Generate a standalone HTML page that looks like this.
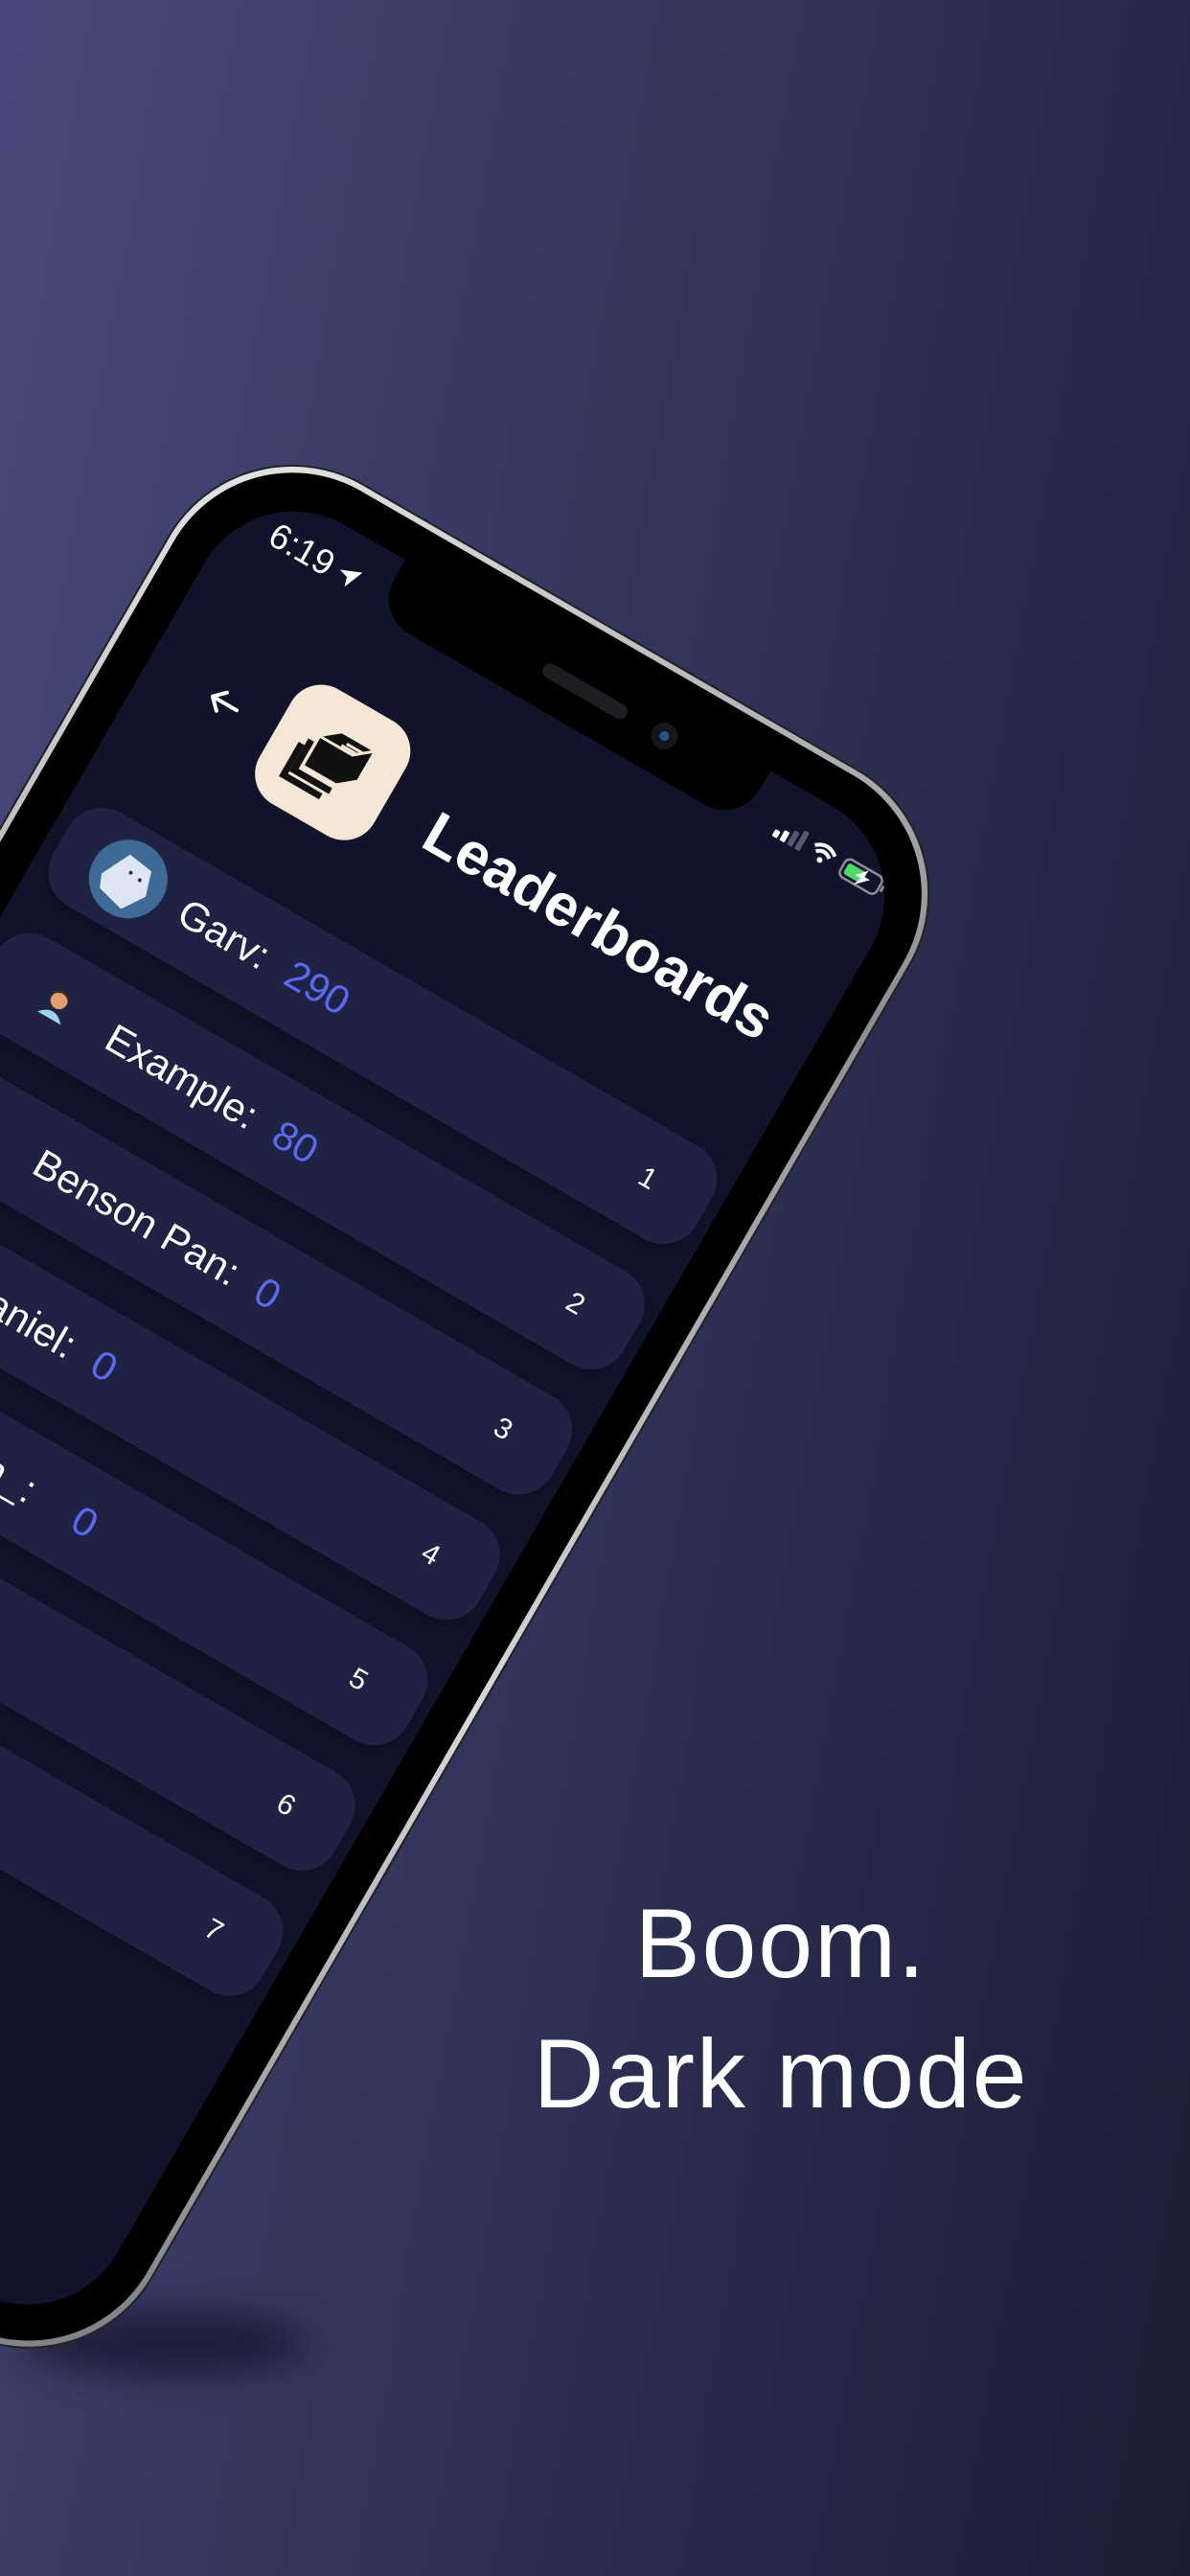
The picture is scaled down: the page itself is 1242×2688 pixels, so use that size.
<!DOCTYPE html>
<html><head><meta charset="utf-8"><style>
*{margin:0;padding:0;box-sizing:border-box}
html,body{width:1242px;height:2688px;overflow:hidden}
body{position:relative;background:linear-gradient(100deg,#48497a 0%,#33355c 45%,#1b1c35 100%);font-family:"Liberation Sans",sans-serif}
.shadow{position:absolute;left:20px;top:2410px;width:300px;height:70px;border-radius:50%;background:rgba(10,10,25,.55);filter:blur(18px)}
.phone{position:absolute;left:250px;top:430px;width:895px;height:1880px;transform-origin:0 0;transform:rotate(30deg);border-radius:150px;background:linear-gradient(135deg,#e8e8ea,#8d8d92 40%,#d9d9dc 70%,#77777c);border:2px solid #222}
.bez{position:absolute;left:6px;top:6px;right:6px;bottom:6px;border-radius:143px;background:#000}
.screen{position:absolute;left:45px;top:45px;width:803px;height:1788px;border-radius:108px;background:#11132a;overflow:hidden}
.notch{position:absolute;left:180px;top:-5px;width:440px;height:70px;background:#000;border-radius:0 0 42px 42px}
.spk{position:absolute;left:181px;top:22px;width:100px;height:16px;border-radius:8px;background:#1e1e22}
.cam{position:absolute;left:312px;top:15px;width:28px;height:28px;border-radius:50%;background:#15151c}
.cam:after{content:"";position:absolute;left:9px;top:9px;width:10px;height:10px;border-radius:50%;background:#2b4f8a}
.time{position:absolute;left:45px;top:26px;font-size:37px;line-height:37px;color:#fff}
.card{position:absolute;left:15px;width:775px;height:112px;border-radius:40px;background:#1f2243;box-shadow:0 6px 14px rgba(0,0,0,.25)}
.nm{position:absolute;left:145px;top:0;height:112px;line-height:112px;font-size:42px;color:#fff;white-space:nowrap}
.nm b{font-weight:normal;color:#5a6af0;margin-left:26px}
.rk{position:absolute;right:60px;top:0;line-height:112px;font-size:30px;color:#fff}
.title{position:absolute;left:341px;top:200px;font-size:62px;line-height:62px;font-weight:bold;color:#fff;white-space:nowrap}
.icon{position:absolute;left:151px;top:152px;width:138px;height:138px;border-radius:36px;background:#f4e7d6}
</style></head><body>
<div class="shadow"></div>
<div class="phone">
 <div class="bez"></div>
 <div class="screen">
  <div class="notch"><div class="spk"></div><div class="cam"></div></div>
  <div class="time">6:19</div>
  <svg style="position:absolute;left:122px;top:30px" width="30" height="30" viewBox="0 0 30 30"><path d="M26 4 L4 13 L14 16 L17 26 Z" fill="#fff"/></svg>
  <svg style="position:absolute;left:655px;top:34px" width="140" height="30" viewBox="0 0 140 30">
   <rect x="0" y="16" width="6" height="8" rx="1.5" fill="#fff"/><rect x="9" y="12" width="6" height="12" rx="1.5" fill="#fff"/><rect x="18" y="7" width="6" height="17" rx="1.5" fill="#555a70"/><rect x="27" y="2" width="6" height="22" rx="1.5" fill="#555a70"/>
   <path d="M44 10 Q56 0 68 10" stroke="#fff" stroke-width="4" fill="none"/><path d="M48 15 Q56 8 64 15" stroke="#fff" stroke-width="4" fill="none"/><circle cx="56" cy="21" r="3" fill="#fff"/>
   <rect x="80" y="4" width="44" height="21" rx="6" stroke="#8a8d99" stroke-width="2.5" fill="none"/><rect x="84" y="8" width="22" height="13" rx="3" fill="#4cd964"/><rect x="126" y="11" width="3" height="7" rx="1" fill="#8a8d99"/>
   <path d="M106 5 L96 16 L103 16 L99 26 L112 13 L105 13 Z" fill="#fff"/>
  </svg>
  <svg style="position:absolute;left:70px;top:202px" width="44" height="44" viewBox="0 0 44 44"><path d="M36 22 H8 M18 11 L7 22 L18 33" stroke="#fff" stroke-width="4" fill="none" stroke-linecap="round" stroke-linejoin="round"/></svg>
  <div class="icon"><svg width="138" height="138" viewBox="0 0 138 138">
   <path d="M45 52 L62 38 L100 38 L100 72 L83 86 L45 86 Z" fill="#111"/>
   <path d="M45 52 L83 52 L100 38" stroke="#f4e7d6" stroke-width="3" fill="none"/>
   <path d="M72 45 L92 45 M68 49 L88 49" stroke="#f4e7d6" stroke-width="3"/>
   <path d="M38 60 L38 96 L82 96" stroke="#111" stroke-width="7" fill="none"/>
   <path d="M31 68 L31 106 L76 106" stroke="#111" stroke-width="7" fill="none"/>
  </svg></div>
  <div class="title">Leaderboards</div>

  <div class="card" style="top:377px">
   <svg style="position:absolute;left:40px;top:15px" width="82" height="82" viewBox="0 0 82 82"><circle cx="41" cy="41" r="41" fill="#3e6a98"/><path d="M14 50 L30 18 L58 22 L66 48 L50 72 L20 64 Z" fill="#dfe6f3"/><circle cx="40" cy="34" r="2" fill="#333"/><circle cx="52" cy="36" r="2" fill="#333"/></svg>
   <div class="nm">Garv:<b>290</b></div><div class="rk">1</div></div>
  <div class="card" style="top:528px">
   <svg style="position:absolute;left:64px;top:38px" width="36" height="36" viewBox="0 0 36 36"><circle cx="18" cy="13" r="9" fill="#e0a070"/><path d="M9 10 Q18 0 27 10 L27 7 Q18 -2 9 7Z" fill="#4a2a15"/><path d="M4 34 Q18 18 32 34Z" fill="#9fd0f0"/></svg>
   <div class="nm">Example:<b>80</b></div><div class="rk">2</div></div>
  <div class="card" style="top:679px"><div class="nm">Benson Pan:<b>0</b></div><div class="rk">3</div></div>
  <div class="card" style="top:830px"><div class="nm">Daniel:<b>0</b></div><div class="rk">4</div></div>
  <div class="card" style="top:981px"><div class="nm">Joseph_:<b style="margin-left:50px">0</b></div><div class="rk">5</div></div>
  <div class="card" style="top:1132px"><div class="rk">6</div></div>
  <div class="card" style="top:1283px"><div class="rk">7</div></div>
 </div>
</div>
<div style="position:absolute;left:415px;top:1960px;width:800px;text-align:center;color:#fff;font-size:102px;line-height:136px;letter-spacing:2px">Boom.<br>Dark mode</div>
</body></html>
